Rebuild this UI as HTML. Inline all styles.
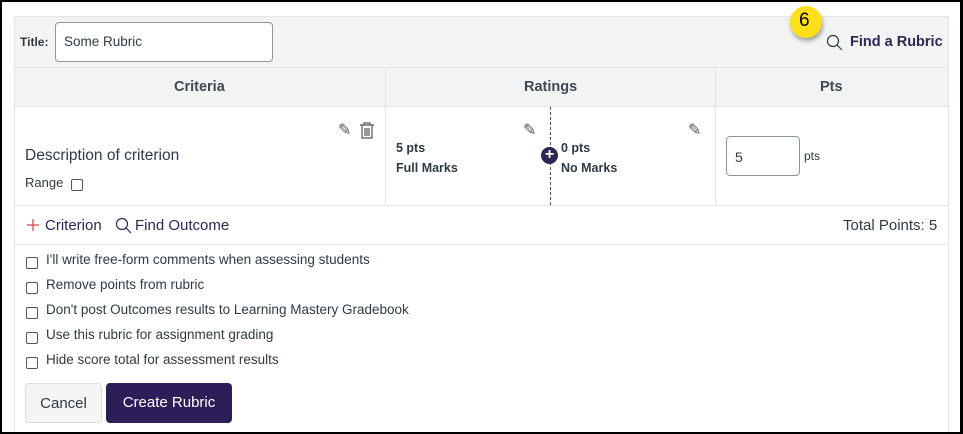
<!DOCTYPE html>
<html><head><style>
*{box-sizing:border-box;margin:0;padding:0}
body{width:963px;height:434px;background:#fff;font-family:"Liberation Sans",sans-serif;color:#2d3b45;position:relative;overflow:hidden}
.frame{position:absolute;left:0;top:0;width:963px;height:434px;border:2px solid #000;border-right-width:3px;border-bottom-width:2px}
.a{position:absolute}
.gray{background:#f2f3f3}
.cb{position:absolute;width:12px;height:12px;border:1px solid #555;border-radius:2px;background:#fff}
.t{position:absolute;font-size:14px;white-space:nowrap}
.b{font-weight:bold}
</style></head><body>
<div class="a" style="left:14px;top:16px;width:935px;height:418px;border-left:1px solid #e5e5e5;border-right:1px solid #e5e5e5;border-top:1px solid #e5e5e5"></div>
<div class="a gray" style="left:15px;top:17px;width:933px;height:89px"></div>
<div class="a" style="left:15px;top:67px;width:933px;height:1px;background:#e2e4e5"></div>
<div class="a" style="left:15px;top:106px;width:933px;height:1px;background:#e2e4e5"></div>
<div class="a" style="left:15px;top:205px;width:933px;height:1px;background:#e2e4e5"></div>
<div class="a" style="left:15px;top:244px;width:933px;height:1px;background:#e2e4e5"></div>
<div class="a" style="left:385px;top:67px;width:1px;height:138px;background:#e2e4e5"></div>
<div class="a" style="left:715px;top:67px;width:1px;height:138px;background:#e2e4e5"></div>
<div class="a" style="left:550px;top:107px;height:98px;border-left:1px dashed #555"></div>

<div class="t b" style="left:20px;top:35px;font-size:12px">Title:</div>
<div class="a" style="left:55px;top:22px;width:218px;height:40px;border:1px solid #8b969e;border-radius:4px;background:#fff"></div>
<div class="t" style="left:64px;top:34px;font-size:13.5px">Some Rubric</div>

<div class="a" style="left:790px;top:6px;width:32px;height:32px;border-radius:50%;background:#fde01a;box-shadow:1px 3px 4px rgba(0,0,0,.35)"></div>
<div class="t" style="left:799px;top:10px;font-size:19px;color:#000">6</div>
<svg class="a" style="left:826px;top:34px" width="18" height="18" viewBox="0 0 18 18"><circle cx="7" cy="7" r="5.5" fill="none" stroke="#2d3b45" stroke-width="1.2"/><line x1="11" y1="11" x2="16" y2="16" stroke="#2d3b45" stroke-width="1.2"/></svg>
<div class="t b" style="left:850px;top:34px;font-size:14.5px;color:#2d2752">Find a Rubric</div>

<div class="t b" style="left:174px;top:79px;font-size:14.5px;color:#3d4a54">Criteria</div>
<div class="t b" style="left:524px;top:79px;font-size:14.5px;color:#3d4a54">Ratings</div>
<div class="t b" style="left:820px;top:79px;font-size:14.5px;color:#3d4a54">Pts</div>

<div class="t" style="left:338px;top:120px;font-size:16px;color:#555">✎</div>
<svg class="a" style="left:359px;top:122px" width="16" height="17" viewBox="0 0 16 17"><path d="M1 3h14M5 3V1h6v2M3 3v13h10V3M6 6v8M8 6v8M10 6v8" fill="none" stroke="#555" stroke-width="1.2"/></svg>
<div class="t" style="left:25px;top:147px;font-size:15.5px">Description of criterion</div>
<div class="t" style="left:25px;top:175px;font-size:13px">Range</div>
<div class="cb" style="left:71px;top:179px"></div>

<div class="t" style="left:523px;top:120px;font-size:16px;color:#555">✎</div>
<div class="t" style="left:688px;top:120px;font-size:16px;color:#555">✎</div>
<div class="t b" style="left:396px;top:141px;font-size:12.5px">5 pts</div>
<div class="t b" style="left:396px;top:161px;font-size:12.5px">Full Marks</div>
<div class="t b" style="left:561px;top:141px;font-size:12.5px">0 pts</div>
<div class="t b" style="left:561px;top:161px;font-size:12.5px">No Marks</div>
<div class="a" style="left:541px;top:147px;width:17px;height:17px;border-radius:50%;background:#2d2752;color:#fff;font-weight:bold;font-size:16px;line-height:16px;text-align:center">+</div>

<div class="a" style="left:726px;top:136px;width:74px;height:40px;border:1px solid #8b969e;border-radius:4px;background:#fff"></div>
<div class="t" style="left:735px;top:149px;font-size:14px">5</div>
<div class="t" style="left:804px;top:149px;font-size:12px">pts</div>

<svg class="a" style="left:26px;top:218px" width="14" height="14" viewBox="0 0 14 14"><path d="M7 1v12M1 7h12" stroke="#c44" stroke-width="1.2"/></svg>
<div class="t" style="left:45px;top:217px;font-size:15px;color:#2d2752">Criterion</div>
<svg class="a" style="left:115px;top:217px" width="18" height="18" viewBox="0 0 18 18"><circle cx="7" cy="7" r="5.5" fill="none" stroke="#2d2752" stroke-width="1.2"/><line x1="11" y1="11" x2="16" y2="16" stroke="#2d2752" stroke-width="1.2"/></svg>
<div class="t" style="left:135px;top:217px;font-size:15px;color:#2d2752">Find Outcome</div>
<div class="t" style="left:843px;top:217px;font-size:15px">Total Points: 5</div>

<div class="cb" style="left:26px;top:257px"></div><div class="t" style="left:46px;top:252px;font-size:13.5px">I'll write free-form comments when assessing students</div>
<div class="cb" style="left:26px;top:282px"></div><div class="t" style="left:46px;top:277px;font-size:13.5px">Remove points from rubric</div>
<div class="cb" style="left:26px;top:307px"></div><div class="t" style="left:46px;top:302px;font-size:13.5px">Don't post Outcomes results to Learning Mastery Gradebook</div>
<div class="cb" style="left:26px;top:332px"></div><div class="t" style="left:46px;top:327px;font-size:13.5px">Use this rubric for assignment grading</div>
<div class="cb" style="left:26px;top:357px"></div><div class="t" style="left:46px;top:352px;font-size:13.5px">Hide score total for assessment results</div>

<div class="a" style="left:25px;top:383px;width:77px;height:40px;background:#f5f5f5;border:1px solid #ddd;border-radius:4px;font-size:15px;line-height:39px;text-align:center">Cancel</div>
<div class="a" style="left:106px;top:383px;width:126px;height:40px;background:#2d1e5a;border-radius:4px;color:#fff;font-size:15px;line-height:40px;text-align:center">Create Rubric</div>

<div class="frame"></div>
</body></html>
